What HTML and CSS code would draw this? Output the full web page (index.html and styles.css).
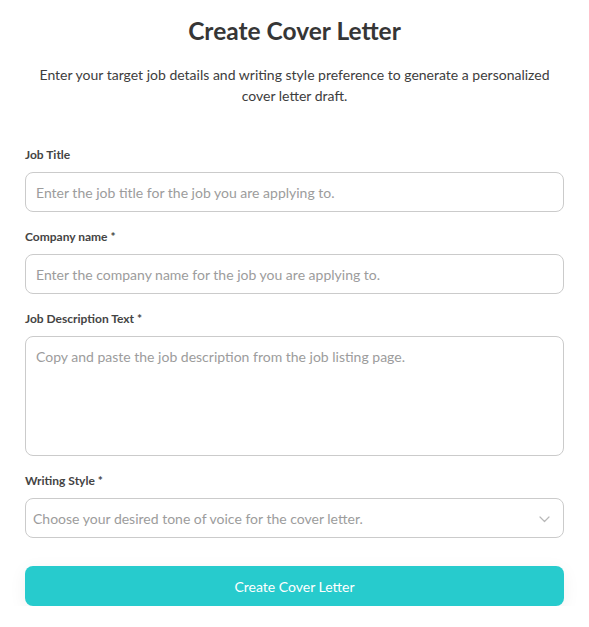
FILE: index.html
```html
<!DOCTYPE html>
<html lang="en">
<head>
<meta charset="utf-8">
<title>Create Cover Letter</title>
<link rel="stylesheet" href="styles.css">
</head>
<body>
<main class="page">
  <h1 class="title">Create Cover Letter</h1>
  <p class="subtitle">Enter your target job details and writing style preference to generate a personalized cover letter draft.</p>
  <form class="form">
    <div class="field">
      <label class="label" for="job">Job Title</label>
      <input class="input" id="job" type="text" placeholder="Enter the job title for the job you are applying to.">
    </div>
    <div class="field">
      <label class="label" for="company">Company name *</label>
      <input class="input" id="company" type="text" placeholder="Enter the company name for the job you are applying to.">
    </div>
    <div class="field">
      <label class="label" for="desc">Job Description Text *</label>
      <textarea class="input textarea" id="desc" placeholder="Copy and paste the job description from the job listing page."></textarea>
    </div>
    <div class="field">
      <label class="label" for="style">Writing Style *</label>
      <div class="select">
        <span class="select-text">Choose your desired tone of voice for the cover letter.</span>
        <svg class="chevron" width="11" height="7" viewBox="0 0 11 7"><path d="M1 1l4.5 4.5L10 1" fill="none" stroke="#b8b8b8" stroke-width="1.2" stroke-linecap="round" stroke-linejoin="round"/></svg>
      </div>
    </div>
    <button class="button" type="button">Create Cover Letter</button>
  </form>
</main>
</body>
</html>
```
FILE: styles.css
```css
* { box-sizing: border-box; }
html, body { margin: 0; padding: 0; background: #fff; }
body { font-family: "Lato", "Noto Sans", sans-serif; color: #3a3a3a; }
.page { width: 589px; padding: 15px 25px 0; }
.title { margin: 0; text-align: center; font-size: 24.5px; line-height: 32px; font-weight: 700; color: #363636; }
.subtitle { margin: 17px auto 0; width: 530px; text-align: center; font-size: 14px; line-height: 21px; color: #3d3d3d; }
.form { display: flex; flex-direction: column; margin-top: 41px; }
.field { display: flex; flex-direction: column; gap: 9px; margin-bottom: 17px; }
.label { font-size: 12px; line-height: 16px; font-weight: 700; color: #444; }
.input { width: 539px; height: 40px; border: 1px solid #cbcbcb; border-radius: 8px; padding: 0 10px; font-family: inherit; font-size: 14px; color: #333; background: #fff; outline: none; }
.input::placeholder { color: #9c9c9c; }
.textarea { height: 120px; padding: 10px 10px; resize: none; line-height: 20px; display: block; }
.select { height: 40px; border: 1px solid #cbcbcb; border-radius: 8px; padding: 0 13px 0 7px; display: flex; align-items: center; justify-content: space-between; }
.select-text { font-size: 14px; color: #9c9c9c; }
.chevron { margin-top: 3px; }
.button { margin-top: 11px; height: 40px; border: none; border-radius: 8px; background: #27cbcd; color: #fff; font-family: inherit; font-size: 14px; box-shadow: 0 4px 18px rgba(0,0,0,0.06); cursor: pointer; }
```
